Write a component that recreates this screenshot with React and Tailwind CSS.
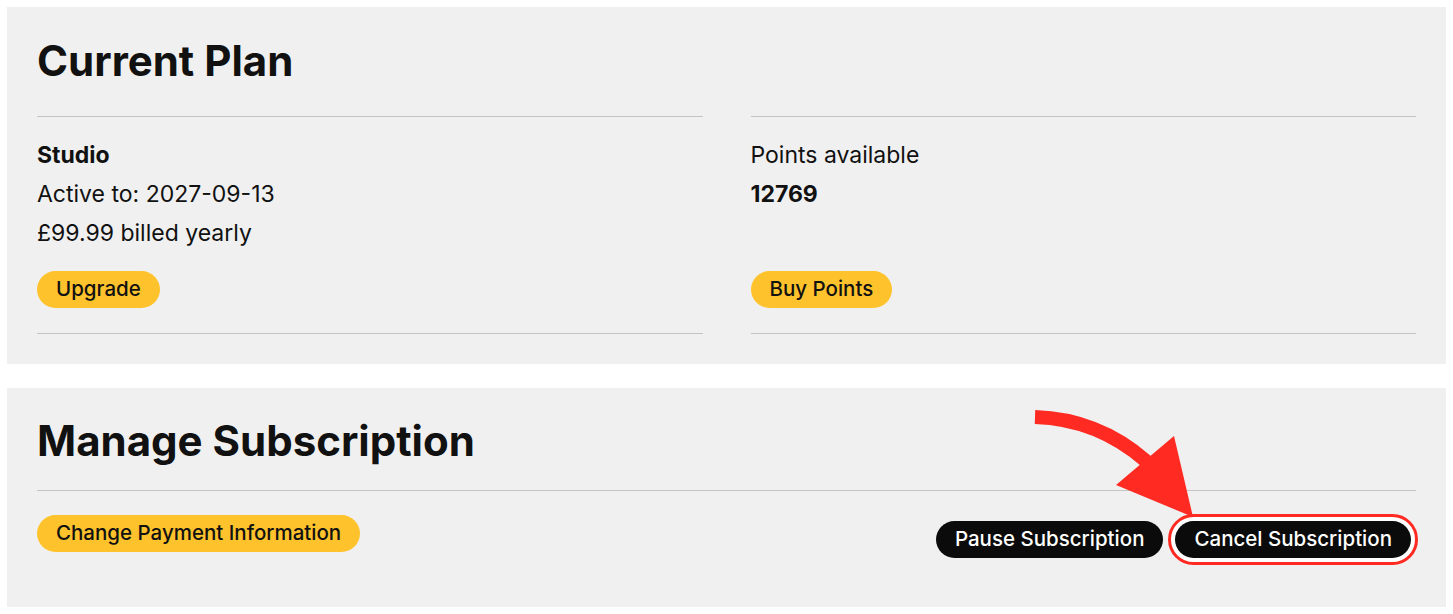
import React from "react";

function PillButton({ children, dark = false }) {
  return (
    <button
      className={
        "inline-flex h-[37px] items-center rounded-full px-[19px] text-[20.5px] font-medium leading-none " +
        (dark ? "bg-[#0b0b0b] text-white" : "bg-[#fec22c] text-[#111]")
      }
    >
      {children}
    </button>
  );
}

function PlanColumn({ children, action }) {
  return (
    <div className="flex flex-col border-y border-[#c4c4c4] pt-[19px] pb-[25px]">
      <div className="text-[23px] leading-[39px]">{children}</div>
      <div className="mt-auto pt-[18px]">{action}</div>
    </div>
  );
}

function CurvedArrow() {
  // annotation arrow pointing at the cancel button
  return (
    <svg
      className="pointer-events-none absolute left-[1013px] top-[12px]"
      width="185"
      height="125"
      viewBox="1020 400 185 125"
    >
      <path d="M1035 417 Q1098 419 1146 461" fill="none" stroke="#ff2a22" strokeWidth="14" />
      <polygon points="1116,485 1174,436 1193,517" fill="#ff2a22" />
    </svg>
  );
}

export default function App() {
  return (
    <div
      className="flex min-h-[614px] flex-col gap-6 bg-white p-[7px] text-[#111]"
      style={{ fontFamily: "Inter, 'Open Sans', sans-serif" }}
    >
      <section className="bg-[#f0f0f0] px-[30px] pt-[30px] pb-[30px]">
        <h2 className="text-[42px] font-bold leading-[48px]">Current Plan</h2>
        <div className="mt-[31px] grid grid-cols-2 gap-12">
          <PlanColumn action={<PillButton>Upgrade</PillButton>}>
            <p className="font-bold">Studio</p>
            <p>Active to: 2027-09-13</p>
            <p>£99.99 billed yearly</p>
          </PlanColumn>
          <PlanColumn action={<PillButton>Buy Points</PillButton>}>
            <p>Points available</p>
            <p className="font-bold">12769</p>
          </PlanColumn>
        </div>
      </section>

      <section className="relative bg-[#f0f0f0] px-[30px] pt-[29px] pb-[42px]">
        <h2 className="text-[42px] font-bold leading-[48px]">Manage Subscription</h2>
        <div className="mt-[25px] flex items-start justify-between border-t border-[#c4c4c4] pt-[24px]">
          <PillButton>Change Payment Information</PillButton>
          <div className="-mt-px -mr-[2px] flex items-center gap-[5px]">
            <PillButton dark>Pause Subscription</PillButton>
            <div className="rounded-full border-[3px] border-[#ff2a22] bg-white p-[4px]">
              <PillButton dark>Cancel Subscription</PillButton>
            </div>
          </div>
        </div>
        <CurvedArrow />
      </section>
    </div>
  );
}
